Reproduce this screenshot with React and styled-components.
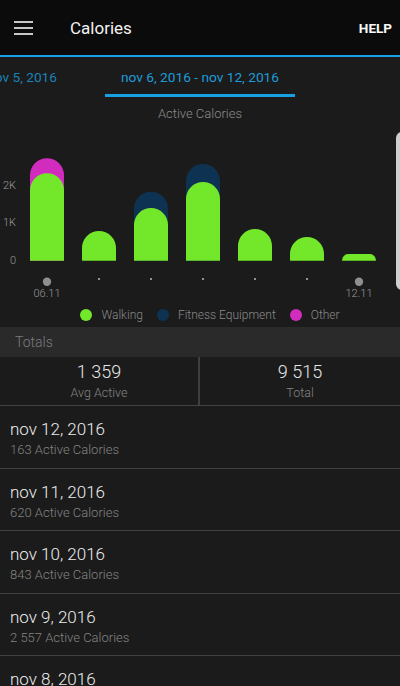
import React from "react";
import styled, { createGlobalStyle } from "styled-components";

const Global = createGlobalStyle`
  html, body { margin: 0; padding: 0; background: #1b1b1b; }
  body { font-family: Roboto, "Noto Sans", "Liberation Sans", sans-serif; }
  * { box-sizing: border-box; }
`;

const Screen = styled.div`
  position: relative;
  width: 400px;
  height: 686px;
  overflow: hidden;
  background: #1b1b1b;
`;

const Header = styled.header`
  height: 57px;
  background: #0b0b0b;
  border-bottom: 2px solid #17a0e2;
  display: flex;
  align-items: center;
  padding: 0 8px 0 14px;
`;

const MenuIcon = styled.div`
  width: 19px;
  display: flex;
  flex-direction: column;
  gap: 4px;
  & > span {
    display: block;
    height: 2px;
    background: #c8c8c8;
  }
`;

const Title = styled.h1`
  margin: 0 0 0 37px;
  font-size: 17px;
  font-weight: 400;
  color: #f2f2f2;
  flex: 1;
`;

const Help = styled.span`
  font-size: 13.5px;
  font-weight: 700;
  color: #fafafa;
`;

const TabStrip = styled.div`
  display: grid;
  grid-template-columns: 105px 190px 105px;
  height: 40px;
  overflow: hidden;
`;

const Tab = styled.div`
  display: flex;
  align-items: center;
  justify-content: ${(p) => (p.$side ? "flex-end" : "center")};
  padding-right: ${(p) => (p.$side ? "48px" : "0")};
  white-space: nowrap;
  font-size: 13.7px;
  font-weight: 400;
  color: ${(p) => (p.$active ? "#1f9ad8" : "#1b82b8")};
  border-bottom: 3px solid ${(p) => (p.$active ? "#17a0e2" : "transparent")};
  padding-top: 3px;
`;

const ChartTitle = styled.div`
  text-align: center;
  font-size: 13px;
  font-weight: 300;
  color: #8c8c8c;
  margin-top: 9px;
  height: 24px;
`;

const ChartSvg = styled.svg`
  display: block;
  width: 400px;
  height: 170px;
`;

const Legend = styled.div`
  display: flex;
  justify-content: center;
  align-items: center;
  gap: 14px;
  height: 27px;
  padding-top: 2px;
  padding-left: 20px;
`;

const LegendItem = styled.div`
  display: flex;
  align-items: center;
  gap: 9px;
  font-size: 12px;
  font-weight: 300;
  color: #8a8a8a;
`;

const Swatch = styled.span`
  width: 12px;
  height: 12px;
  border-radius: 50%;
  background: ${(p) => p.$color};
`;

const SectionHead = styled.div`
  height: 30px;
  background: #2a2a2a;
  display: flex;
  align-items: center;
  padding-left: 15px;
  font-size: 14px;
  font-weight: 300;
  color: #7c7c7c;
`;

const Totals = styled.div`
  display: grid;
  grid-template-columns: 1fr 1fr;
  height: 49px;
  border-bottom: 1px solid #444;
`;

const TotalCell = styled.div`
  display: flex;
  flex-direction: column;
  align-items: center;
  padding-top: 4px;
  border-right: ${(p) => (p.$divider ? "2px solid #3f3f3f" : "none")};
`;

const TotalValue = styled.div`
  font-size: 18px;
  font-weight: 300;
  color: #e6e6e6;
  line-height: 22px;
`;

const TotalLabel = styled.div`
  font-size: 12.5px;
  font-weight: 300;
  color: #858585;
  line-height: 19px;
`;

const Row = styled.div`
  height: 62.5px;
  border-bottom: 1.5px solid #414141;
  padding: 12px 0 0 10px;
`;

const RowTitle = styled.div`
  font-size: 17px;
  font-weight: 300;
  color: #ececec;
  line-height: 22px;
`;

const RowSub = styled.div`
  font-size: 13px;
  font-weight: 300;
  color: #838383;
  line-height: 19px;
`;

const ScrollHandle = styled.div`
  position: absolute;
  left: 396px;
  top: 132px;
  width: 12px;
  height: 158px;
  border-radius: 7px;
  background: #cfcfcf;
`;

const GREEN = "#73e82a";
const NAVY = "#0e3352";
const MAGENTA = "#d22cbf";
const B = 130.7;

function barPath(x, top, w = 34) {
  const h = B - top;
  const r = w / 2;
  if (h >= r) {
    return `M${x},${B} V${top + r} A${r},${r} 0 0 1 ${x + w},${top + r} V${B} Z`;
  }
  const rx = 6;
  return `M${x},${B} V${top + h} A${rx},${h} 0 0 1 ${x + rx},${top} H${x + w - rx} A${rx},${h} 0 0 1 ${x + w},${B} Z`;
}

const bars = [
  { green: 43.3, extra: 28.3, color: MAGENTA },
  { green: 101 },
  { green: 78, extra: 61.7, color: NAVY },
  { green: 52, extra: 34, color: NAVY },
  { green: 99 },
  { green: 107 },
  { green: 124 },
];

function Chart() {
  return (
    <ChartSvg viewBox="0 0 400 170">
      <g fill="#9a9a9a" fontSize="11" fontWeight="300" fontFamily="Roboto, sans-serif" textAnchor="end">
        <text x="16" y="59">2K</text>
        <text x="16" y="96">1K</text>
        <text x="16" y="134">0</text>
      </g>
      {bars.map((b, i) => {
        const x = 30 + 52 * i;
        return (
          <g key={i}>
            {b.extra != null && <path d={barPath(x, b.extra)} fill={b.color} />}
            <path d={barPath(x, b.green)} fill={GREEN} />
            {i === 0 || i === 6 ? (
              <circle cx={x + 17} cy={151.7} r={4.2} fill="#8f8f8f" />
            ) : (
              <circle cx={x + 17} cy={149} r={1} fill="#bdbdbd" />
            )}
          </g>
        );
      })}
      <g fill="#9a9a9a" fontSize="11" fontWeight="300" fontFamily="Roboto, sans-serif" textAnchor="middle">
        <text x="47" y="167">06.11</text>
        <text x="359" y="167">12.11</text>
      </g>
    </ChartSvg>
  );
}

const days = [
  ["nov 12, 2016", "163 Active Calories"],
  ["nov 11, 2016", "620 Active Calories"],
  ["nov 10, 2016", "843 Active Calories"],
  ["nov 9, 2016", "2 557 Active Calories"],
  ["nov 8, 2016", "1 024 Active Calories"],
];

export default function App() {
  return (
    <Screen>
      <Global />
      <Header>
        <MenuIcon>
          <span />
          <span />
          <span />
        </MenuIcon>
        <Title>Calories</Title>
        <Help>HELP</Help>
      </Header>
      <TabStrip>
        <Tab $side>nov 5, 2016</Tab>
        <Tab $active>nov 6, 2016 - nov 12, 2016</Tab>
        <Tab />
      </TabStrip>
      <ChartTitle>Active Calories</ChartTitle>
      <Chart />
      <Legend>
        <LegendItem>
          <Swatch $color={GREEN} />
          Walking
        </LegendItem>
        <LegendItem>
          <Swatch $color={NAVY} />
          Fitness Equipment
        </LegendItem>
        <LegendItem>
          <Swatch $color={MAGENTA} />
          Other
        </LegendItem>
      </Legend>
      <SectionHead>Totals</SectionHead>
      <Totals>
        <TotalCell $divider>
          <TotalValue>1 359</TotalValue>
          <TotalLabel>Avg Active</TotalLabel>
        </TotalCell>
        <TotalCell>
          <TotalValue>9 515</TotalValue>
          <TotalLabel>Total</TotalLabel>
        </TotalCell>
      </Totals>
      {days.map(([t, s]) => (
        <Row key={t}>
          <RowTitle>{t}</RowTitle>
          <RowSub>{s}</RowSub>
        </Row>
      ))}
      <ScrollHandle />
    </Screen>
  );
}
